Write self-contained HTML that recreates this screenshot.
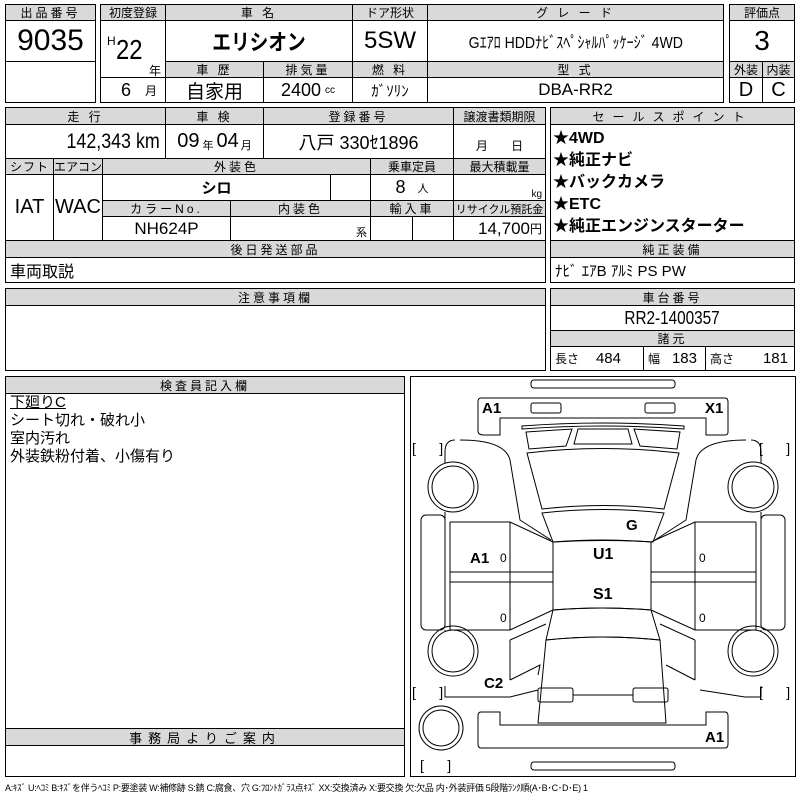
<!DOCTYPE html>
<html><head><meta charset="utf-8"><style>
body{margin:0;width:800px;height:800px;background:#fff;position:relative;overflow:hidden;font-family:"Liberation Sans","Noto Sans CJK JP",sans-serif;color:#000}
.b{position:absolute;border:1px solid #000;box-sizing:border-box}
.c{position:absolute;box-sizing:border-box;border:1px solid #000;display:flex;align-items:center;justify-content:center;white-space:nowrap;overflow:hidden}
.h{background:#d9d9d9;font-size:12px;letter-spacing:3px}
.t{position:absolute;white-space:nowrap}
.n{display:inline-block;transform:scaleX(.85)}
</style></head><body>
<!-- block 1 -->
<div class="c h" style="left:5px;top:4px;width:91px;height:17px">出品番号</div>
<div class="c" style="left:5px;top:20px;width:91px;height:42px;font-size:30px">9035</div>
<div class="c" style="left:5px;top:61px;width:91px;height:42px"></div>
<!-- block 2 -->
<div class="c h" style="left:100px;top:4px;width:66px;height:17px;letter-spacing:0">初度登録</div>
<div class="c h" style="left:165px;top:4px;width:188px;height:17px">車 名</div>
<div class="c h" style="left:352px;top:4px;width:76px;height:17px;letter-spacing:0">ドア形状</div>
<div class="c h" style="left:427px;top:4px;width:297px;height:17px">グ レ ー ド</div>
<div class="c" style="left:100px;top:20px;width:66px;height:58px"></div>
<div class="t" style="left:107px;top:34px;font-size:12px">H</div>
<div class="t" style="left:116px;top:34px;font-size:28px;transform:scaleX(.85);transform-origin:left">22</div>
<div class="t" style="left:149px;top:62px;font-size:12px">年</div>
<div class="c" style="left:165px;top:20px;width:188px;height:42px;font-size:22px;font-weight:bold"><span class="n">エリシオン</span></div>
<div class="c" style="left:352px;top:20px;width:76px;height:42px;font-size:24px">5SW</div>
<div class="c" style="left:427px;top:20px;width:297px;height:42px;font-size:16px"><span style="display:inline-block;transform:scaleX(.88)">Gｴｱﾛ HDDﾅﾋﾞｽﾍﾟｼｬﾙﾊﾟｯｹｰｼﾞ 4WD</span></div>
<div class="c h" style="left:165px;top:61px;width:99px;height:17px">車 歴</div>
<div class="c h" style="left:263px;top:61px;width:90px;height:17px">排気量</div>
<div class="c h" style="left:352px;top:61px;width:76px;height:17px">燃 料</div>
<div class="c h" style="left:427px;top:61px;width:297px;height:17px">型 式</div>
<div class="c" style="left:100px;top:77px;width:66px;height:26px;font-size:18px;justify-content:flex-start;padding-left:20px">6 <span style="font-size:12px;margin-left:14px">月</span></div>
<div class="c" style="left:165px;top:77px;width:99px;height:26px;font-size:19px">自家用</div>
<div class="c" style="left:263px;top:77px;width:90px;height:26px;font-size:18px">2400 <span style="font-size:10px;margin-left:4px">cc</span></div>
<div class="c" style="left:352px;top:77px;width:76px;height:26px;font-size:15px">ｶﾞｿﾘﾝ</div>
<div class="c" style="left:427px;top:77px;width:297px;height:26px;font-size:17px">DBA-RR2</div>
<!-- block 3 -->
<div class="c h" style="left:729px;top:4px;width:66px;height:17px;letter-spacing:0">評価点</div>
<div class="c" style="left:729px;top:20px;width:66px;height:42px;font-size:28px">3</div>
<div class="c h" style="left:729px;top:61px;width:34px;height:17px;letter-spacing:0">外装</div>
<div class="c h" style="left:762px;top:61px;width:33px;height:17px;letter-spacing:0">内装</div>
<div class="c" style="left:729px;top:77px;width:34px;height:26px;font-size:20px">D</div>
<div class="c" style="left:762px;top:77px;width:33px;height:26px;font-size:20px">C</div>
<!-- row 2 -->
<div class="c h" style="left:5px;top:107px;width:161px;height:18px">走 行</div>
<div class="c h" style="left:165px;top:107px;width:99px;height:18px">車 検</div>
<div class="c h" style="left:263px;top:107px;width:191px;height:18px">登録番号</div>
<div class="c h" style="left:453px;top:107px;width:93px;height:18px;letter-spacing:0">譲渡書類期限</div>
<div class="c" style="left:5px;top:124px;width:161px;height:35px;font-size:21px;justify-content:flex-end;padding-right:5px"><span class="n" style="transform-origin:right">142,343 km</span></div>
<div class="c" style="left:165px;top:124px;width:99px;height:35px;font-size:20px">09<span style="font-size:11px;margin:6px 3px 0">年</span>04<span style="font-size:11px;margin:6px 0 0 2px">月</span></div>
<div class="c" style="left:263px;top:124px;width:191px;height:35px;font-size:18px">八戸 330ｾ1896</div>
<div class="c" style="left:453px;top:124px;width:93px;height:35px;font-size:12px;align-items:flex-end;padding-bottom:4px">月&nbsp;&nbsp;&nbsp;&nbsp;&nbsp;&nbsp;&nbsp;日</div>
<div class="c h" style="left:5px;top:158px;width:49px;height:17px;letter-spacing:1px">シフト</div>
<div class="c h" style="left:53px;top:158px;width:50px;height:17px;letter-spacing:0">エアコン</div>
<div class="c h" style="left:102px;top:158px;width:269px;height:17px">外装色</div>
<div class="c h" style="left:370px;top:158px;width:84px;height:17px;letter-spacing:0">乗車定員</div>
<div class="c h" style="left:453px;top:158px;width:93px;height:17px;letter-spacing:0">最大積載量</div>
<div class="c" style="left:5px;top:174px;width:49px;height:67px;font-size:20px">IAT</div>
<div class="c" style="left:53px;top:174px;width:50px;height:67px;font-size:20px">WAC</div>
<div class="c" style="left:102px;top:174px;width:229px;height:27px;font-size:15px;font-weight:bold">シロ</div>
<div class="c" style="left:330px;top:174px;width:41px;height:27px"></div>
<div class="c" style="left:370px;top:174px;width:84px;height:27px;font-size:18px">8 <span style="font-size:11px;margin-left:12px">人</span></div>
<div class="c" style="left:453px;top:174px;width:93px;height:27px;font-size:10px;justify-content:flex-end;padding-right:3px;align-items:flex-end">kg</div>
<div class="c h" style="left:102px;top:200px;width:129px;height:17px">カラーNo.</div>
<div class="c h" style="left:230px;top:200px;width:141px;height:17px">内装色</div>
<div class="c h" style="left:370px;top:200px;width:84px;height:17px">輸入車</div>
<div class="c h" style="left:453px;top:200px;width:93px;height:17px;letter-spacing:0;font-size:11px">リサイクル預託金</div>
<div class="c" style="left:102px;top:216px;width:129px;height:25px;font-size:17px">NH624P</div>
<div class="c" style="left:230px;top:216px;width:141px;height:25px;font-size:11px;justify-content:flex-end;padding-right:3px;align-items:flex-end">系</div>
<div class="c" style="left:370px;top:216px;width:43px;height:25px"></div>
<div class="c" style="left:412px;top:216px;width:42px;height:25px"></div>
<div class="c" style="left:453px;top:216px;width:93px;height:25px;font-size:17px;justify-content:flex-end;padding-right:3px">14,700<span style="font-size:12px">円</span></div>
<div class="c h" style="left:5px;top:240px;width:541px;height:18px">後日発送部品</div>
<div class="c" style="left:5px;top:257px;width:541px;height:26px;font-size:16px;justify-content:flex-start;padding-left:4px">車両取説</div>
<div class="c h" style="left:550px;top:107px;width:245px;height:18px;letter-spacing:8px">セールスポイント</div>
<div class="b" style="left:550px;top:124px;width:245px;height:117px"></div>
<div class="t" style="left:553px;top:128px;font-size:16px;font-weight:bold;line-height:22px">★4WD<br>★純正ナビ<br>★バックカメラ<br>★ETC<br>★純正エンジンスターター</div>
<div class="c h" style="left:550px;top:240px;width:245px;height:18px">純正装備</div>
<div class="c" style="left:550px;top:257px;width:245px;height:26px;font-size:15px;justify-content:flex-start;padding-left:4px">ﾅﾋﾞ ｴｱB ｱﾙﾐ PS PW</div>
<!-- row 3 -->
<div class="c h" style="left:5px;top:288px;width:541px;height:18px">注意事項欄</div>
<div class="b" style="left:5px;top:305px;width:541px;height:66px"></div>
<div class="c h" style="left:550px;top:288px;width:245px;height:18px">車台番号</div>
<div class="c" style="left:550px;top:305px;width:245px;height:26px;font-size:18px"><span class="n">RR2-1400357</span></div>
<div class="c h" style="left:550px;top:330px;width:245px;height:17px">諸元</div>
<div class="c" style="left:550px;top:346px;width:94px;height:25px;font-size:15px;justify-content:space-between;padding:0 22px 0 4px"><span style="font-size:12px">長さ</span>484</div>
<div class="c" style="left:643px;top:346px;width:63px;height:25px;font-size:15px;justify-content:space-between;padding:0 8px 0 4px"><span style="font-size:12px">幅</span>183</div>
<div class="c" style="left:705px;top:346px;width:90px;height:25px;font-size:15px;justify-content:space-between;padding:0 6px 0 4px"><span style="font-size:12px">高さ</span>181</div>
<!-- inspector -->
<div class="c h" style="left:5px;top:376px;width:400px;height:18px">検査員記入欄</div>
<div class="b" style="left:5px;top:393px;width:400px;height:336px"></div>
<div class="t" style="left:10px;top:394px;font-size:15px;line-height:18px"><span style="text-decoration:underline">下廻りC</span><br>シート切れ・破れ小<br>室内汚れ<br>外装鉄粉付着、小傷有り</div>
<div class="c h" style="left:5px;top:728px;width:400px;height:18px;font-size:13px;letter-spacing:6px">事務局よりご案内</div>
<div class="b" style="left:5px;top:745px;width:400px;height:32px"></div>
<!-- diagram -->
<div class="b" style="left:410px;top:376px;width:386px;height:401px"></div>
<svg style="position:absolute;left:0;top:0" width="800" height="800" fill="none" stroke="#000" stroke-width="1">
<rect x="531" y="380" width="144" height="8" rx="3"/>
<rect x="531" y="762" width="144" height="8" rx="3"/>
<path d="M481,398 H725 Q728,398 728,402 V432 Q728,435 725,435 H706 V418 H500 V435 H484 Q478,435 478,431 V402 Q478,398 481,398 Z"/>
<rect x="531" y="403" width="30" height="10" rx="2"/>
<rect x="645" y="403" width="30" height="10" rx="2"/>
<path d="M522,426 Q603,420 684,426 L684,429 Q603,423 522,429 Z"/>
<path d="M526,432 L572,429 L566,446 L529,449 Z M634,429 L680,432 L677,449 L640,446 Z M578,429 L628,429 L632,444 L574,444 Z"/>
<path d="M527,453 Q603,444 679,453 L664,509 Q603,502 542,509 Z"/>
<path d="M542,513 Q603,506 664,513 L653,542 Q603,539 553,542 Z"/>
<path d="M553,542 Q603,538 651,542 L651,610 Q603,606 553,610 Z"/>
<path d="M553,610 Q603,606 651,610 L660,640 Q603,634 546,640 Z"/>
<path d="M546,640 Q603,634 660,640 L666,723 H538 Z"/>
<rect x="538" y="688" width="35" height="14" rx="2"/><rect x="633" y="688" width="35" height="14" rx="2"/>
<line x1="573" y1="695" x2="633" y2="695"/>
<path d="M455,440 Q445,440 445,452 V463 M445,512 V522 M445,630 V632 M445,686 V697 H510 L538,690 M700,690 L745,697 H761 V686 M761,630 V632 M761,522 V512 M761,463 V452 Q761,440 751,440"/>
<path d="M460,440 Q505,440 510,460 L520,520 L551,540 M746,440 Q701,440 696,460 L686,520 L655,540"/>
<path d="M450,522 H510 L553,542 M450,630 H510 L553,610 M756,522 H695 L651,542 M756,630 H695 L651,610"/>
<line x1="450" y1="522" x2="450" y2="630"/><line x1="756" y1="522" x2="756" y2="630"/>
<path d="M450,572 H553 M450,582 H553 M756,572 H651 M756,582 H651"/>
<line x1="510" y1="522" x2="510" y2="630"/><line x1="695" y1="522" x2="695" y2="630"/>
<path d="M510,640 L546,624 M510,680 L540,665 L538,675 M510,640 V680 M695,640 L660,624 M695,680 L666,665 M695,640 V680"/>
<rect x="421" y="515" width="24" height="115" rx="5"/>
<rect x="761" y="515" width="24" height="115" rx="5"/>
<circle cx="453" cy="487" r="25"/><circle cx="453" cy="487" r="21"/>
<circle cx="753" cy="487" r="25"/><circle cx="753" cy="487" r="21"/>
<circle cx="453" cy="651" r="25"/><circle cx="453" cy="651" r="21"/>
<circle cx="753" cy="651" r="25"/><circle cx="753" cy="651" r="21"/>
<circle cx="441" cy="728" r="22"/><circle cx="441" cy="728" r="18"/>
<path d="M481,712 H500 V725 H706 V712 H725 Q728,712 728,716 V744 Q728,748 725,748 H481 Q478,748 478,744 V716 Q478,712 481,712 Z"/>
</svg>
<div class="t" style="left:482px;top:400px;font-size:15px;font-weight:bold">A1</div>
<div class="t" style="left:705px;top:400px;font-size:15px;font-weight:bold">X1</div>
<div class="t" style="left:470px;top:550px;font-size:15px;font-weight:bold">A1</div>
<div class="t" style="left:626px;top:517px;font-size:15px;font-weight:bold">G</div>
<div class="t" style="left:593px;top:546px;font-size:16px;font-weight:bold">U1</div>
<div class="t" style="left:593px;top:586px;font-size:16px;font-weight:bold">S1</div>
<div class="t" style="left:484px;top:675px;font-size:15px;font-weight:bold">C2</div>
<div class="t" style="left:705px;top:729px;font-size:15px;font-weight:bold">A1</div>
<div class="t" style="left:500px;top:551px;font-size:12px">0</div>
<div class="t" style="left:500px;top:611px;font-size:12px">0</div>
<div class="t" style="left:699px;top:551px;font-size:12px">0</div>
<div class="t" style="left:699px;top:611px;font-size:12px">0</div>
<div class="t" style="left:412px;top:440px;font-size:14px">[&nbsp;&nbsp;&nbsp;&nbsp;&nbsp;&nbsp;]</div>
<div class="t" style="left:759px;top:440px;font-size:14px">[&nbsp;&nbsp;&nbsp;&nbsp;&nbsp;&nbsp;]</div>
<div class="t" style="left:412px;top:684px;font-size:14px">[&nbsp;&nbsp;&nbsp;&nbsp;&nbsp;&nbsp;]</div>
<div class="t" style="left:759px;top:684px;font-size:14px">[&nbsp;&nbsp;&nbsp;&nbsp;&nbsp;&nbsp;]</div>
<div class="t" style="left:420px;top:757px;font-size:14px">[&nbsp;&nbsp;&nbsp;&nbsp;&nbsp;&nbsp;]</div>
<div class="t" style="left:5px;top:781px;font-size:9px;letter-spacing:-0.3px">A:ｷｽﾞ U:ﾍｺﾐ B:ｷｽﾞを伴うﾍｺﾐ P:要塗装 W:補修跡 S:錆 C:腐食、穴 G:ﾌﾛﾝﾄｶﾞﾗｽ点ｷｽﾞ XX:交換済み X:要交換 欠:欠品 内･外装評価 5段階ﾗﾝｸ順(A･B･C･D･E) 1</div>
</body></html>
